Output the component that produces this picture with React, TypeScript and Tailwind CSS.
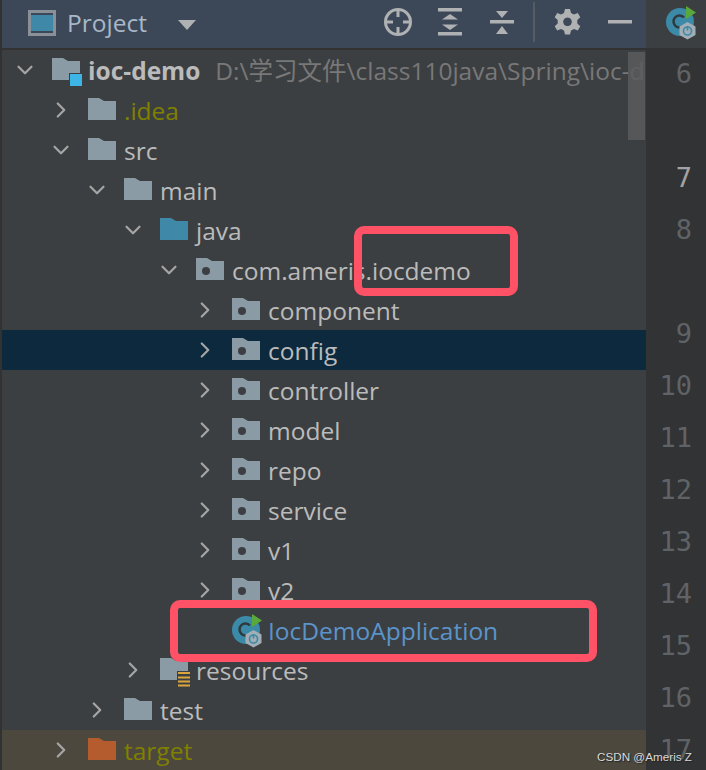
import { ChevronDown, ChevronRight } from 'lucide-react';

type Kind = 'folder' | 'module' | 'source' | 'package' | 'excluded' | 'resources' | 'app';

type Row = {
  depth: number;
  name: string;
  kind: Kind;
  open?: boolean;
  leaf?: boolean;
  hint?: string;
  color?: string;
  bg?: string;
};

const rows: Row[] = [
  { depth: 0, name: 'ioc-demo', kind: 'module', open: true, hint: 'D:\\学习文件\\class110java\\Spring\\ioc-d' },
  { depth: 1, name: '.idea', kind: 'folder', color: 'text-[#808000]' },
  { depth: 1, name: 'src', kind: 'folder', open: true },
  { depth: 2, name: 'main', kind: 'folder', open: true },
  { depth: 3, name: 'java', kind: 'source', open: true },
  { depth: 4, name: 'com.ameris.iocdemo', kind: 'package', open: true },
  { depth: 5, name: 'component', kind: 'package' },
  { depth: 5, name: 'config', kind: 'package', bg: 'bg-[#0d293e]' },
  { depth: 5, name: 'controller', kind: 'package' },
  { depth: 5, name: 'model', kind: 'package' },
  { depth: 5, name: 'repo', kind: 'package' },
  { depth: 5, name: 'service', kind: 'package' },
  { depth: 5, name: 'v1', kind: 'package' },
  { depth: 5, name: 'v2', kind: 'package' },
  { depth: 5, name: 'IocDemoApplication', kind: 'app', leaf: true, color: 'text-[#5b94c9]' },
  { depth: 3, name: 'resources', kind: 'resources' },
  { depth: 2, name: 'test', kind: 'folder' },
  { depth: 1, name: 'target', kind: 'excluded', color: 'text-[#808000]', bg: 'bg-[#4c483e]' },
];

const gutter = ['6', '', '7', '8', '', '9', '10', '11', '12', '13', '14', '15', '16', '17'];

function Folder({ fill = '#8a9ba6', children }: { fill?: string; children?: React.ReactNode }) {
  return (
    <svg width="36" height="32" viewBox="0 0 36 32" className="overflow-visible">
      <path d="M0 4h11l5 3h12v19H0z" fill={fill} />
      {children}
    </svg>
  );
}

function AppIcon() {
  return (
    <svg width="36" height="32" viewBox="0 0 36 32" className="overflow-visible">
      <circle cx="14" cy="16" r="14" fill="#3b8aa8" />
      <path d="M18 11.500a6 6 0 1 0 0 8" fill="none" stroke="#2f3a40" strokeWidth="2.500" />
      <path d="M20 0l10 6.500-10 6.500z" fill="#59a83a" />
      <path d="M21.500 16l8 4.500v8.500l-8 4.500-8-4.500v-8.500z" fill="#a3adb5" />
      <circle cx="21.500" cy="25" r="4" fill="none" stroke="#3b8aa8" strokeWidth="1.600" />
      <path d="M21.500 20v4.500" stroke="#3b8aa8" strokeWidth="1.600" />
    </svg>
  );
}

function RowIcon({ kind }: { kind: Kind }) {
  if (kind === 'app') return <AppIcon />;
  if (kind === 'source') return <Folder fill="#3f88a8" />;
  if (kind === 'excluded') return <Folder fill="#b55c2e" />;
  if (kind === 'package') {
    return (
      <Folder>
        <circle cx="10" cy="17" r="4" fill="#3c3f41" />
      </Folder>
    );
  }
  if (kind === 'module') {
    return (
      <Folder>
        <rect x="17" y="19" width="13" height="13" fill="#3c3f41" />
        <rect x="18" y="20" width="12" height="12" fill="#3db5e6" />
      </Folder>
    );
  }
  if (kind === 'resources') {
    return (
      <Folder>
        <rect x="17" y="17" width="13" height="16" fill="#3c3f41" />
        <path d="M18 19h12M18 23.500h12M18 27.500h12M18 31.500h12" stroke="#dba53e" strokeWidth="2" />
      </Folder>
    );
  }
  return <Folder />;
}

function TreeRow({ row }: { row: Row }) {
  const Chevron = row.open ? ChevronDown : ChevronRight;
  return (
    <div
      className={`flex h-10 shrink-0 items-center whitespace-nowrap ${row.bg ?? ''}`}
      style={{ paddingLeft: 5 + row.depth * 36 }}
    >
      <div className="flex w-[45px] shrink-0 justify-center pr-[9px]">
        {!row.leaf && <Chevron size={26} strokeWidth={2} className="text-[#a6a6a6]" />}
      </div>
      <div className="w-9 shrink-0">
        <RowIcon kind={row.kind} />
      </div>
      <span className={`pt-[2px] ${row.depth === 0 ? 'font-bold' : ''} ${row.color ?? 'text-[#bbbbbb]'}`}>{row.name}</span>
      {row.hint && <span className="ml-[15px] pt-[2px] text-[#787878]">{row.hint}</span>}
    </div>
  );
}

function HeaderIcons() {
  return (
    <svg width="280" height="48" viewBox="0 0 280 48" className="shrink-0">
      <g fill="none" stroke="#afb1b3">
        <circle cx="32" cy="22" r="12.500" strokeWidth="3" />
        <path d="M32 9v8M32 27v8M19 22h8M37 22h8" strokeWidth="3" />
      </g>
      <g fill="#afb1b3">
        <rect x="72" y="8" width="24" height="3.500" />
        <rect x="72" y="32" width="24" height="3.500" />
        <path d="M84 14l8 5.500H76zM84 30l8-5.500H76z" />
        <rect x="124" y="20" width="24" height="3.500" />
        <path d="M136 18l-6-7h12zM136 26l-6 8h12z" />
      </g>
      <rect x="167" y="2" width="2" height="40" fill="#555c66" />
      <path
        d="M199 9h5l1 4 3 1.500 3.800-1.500 2.500 4.300-3 2.700v3.500l3 2.700-2.500 4.300-3.800-1.500-3 1.500-1 4h-5l-1-4-3-1.500-3.800 1.500-2.500-4.300 3-2.700V20l-3-2.700 2.500-4.300 3.800 1.500 3-1.500zM201.500 17.500a4.300 4.300 0 1 0 .01 0z"
        fill="#afb1b3"
        fillRule="evenodd"
      />
      <rect x="242" y="20" width="24" height="3.500" fill="#afb1b3" />
    </svg>
  );
}

export default function App() {
  return (
    <div className="relative flex h-[770px] w-[706px] overflow-hidden bg-[#313335] font-['Open_Sans','Noto_Sans_CJK_SC',sans-serif] text-[24.5px]">
      <div className="flex w-[646px] shrink-0 flex-col overflow-hidden border-l-2 border-[#323232] bg-[#3c3f41]">
        <header className="flex h-[50px] shrink-0 items-start border-b-2 border-[#323232] bg-[#3c4858]">
          <div className="ml-[26px] mt-[10px] flex h-[26px] w-[28px] items-center justify-center border-[3px] border-[#8a9097]">
            <div className="h-[16px] w-[22px] bg-[#3f88a8]" />
          </div>
          <span className="ml-[11px] mt-[5px] text-[#a9b7c6]">Project</span>
          <div className="ml-[31px] mt-[20px] h-0 w-0 border-x-[9px] border-t-[10px] border-x-transparent border-t-[#afb1b3]" />
          <div className="ml-auto">
            <HeaderIcons />
          </div>
        </header>
        {rows.map((row) => (
          <TreeRow key={row.name} row={row} />
        ))}
      </div>

      <div className="flex flex-1 flex-col">
        <div className="flex h-12 shrink-0 items-center bg-[#3c3f41] pb-1 pl-5">
          <AppIcon />
        </div>
        {gutter.map((n, i) => (
          <div
            key={i}
            className={`flex h-[52px] shrink-0 items-center justify-end pr-[14px] font-['DejaVu_Sans_Mono',monospace] text-[27px] ${n === '7' ? 'text-[#a4a3a3]' : 'text-[#606366]'}`}
          >
            {n}
          </div>
        ))}
      </div>

      <div className="absolute left-[628px] top-[52px] h-[88px] w-[17px] bg-[#5a5c5e]/85" />
      <div className="absolute left-[354px] top-[226px] h-[70px] w-[164px] rounded-[10px] border-[8px] border-[#ff5266]" />
      <div className="absolute left-[170px] top-[600px] h-[62px] w-[427px] rounded-[10px] border-[8px] border-[#ff5266]" />
      <div className="absolute left-[597px] top-[748px] font-['Liberation_Sans',sans-serif] text-[11.7px] leading-[18px] text-[#d8d8d8] [text-shadow:1px_1px_1px_#222]">
        CSDN @Ameris Z
      </div>
    </div>
  );
}
